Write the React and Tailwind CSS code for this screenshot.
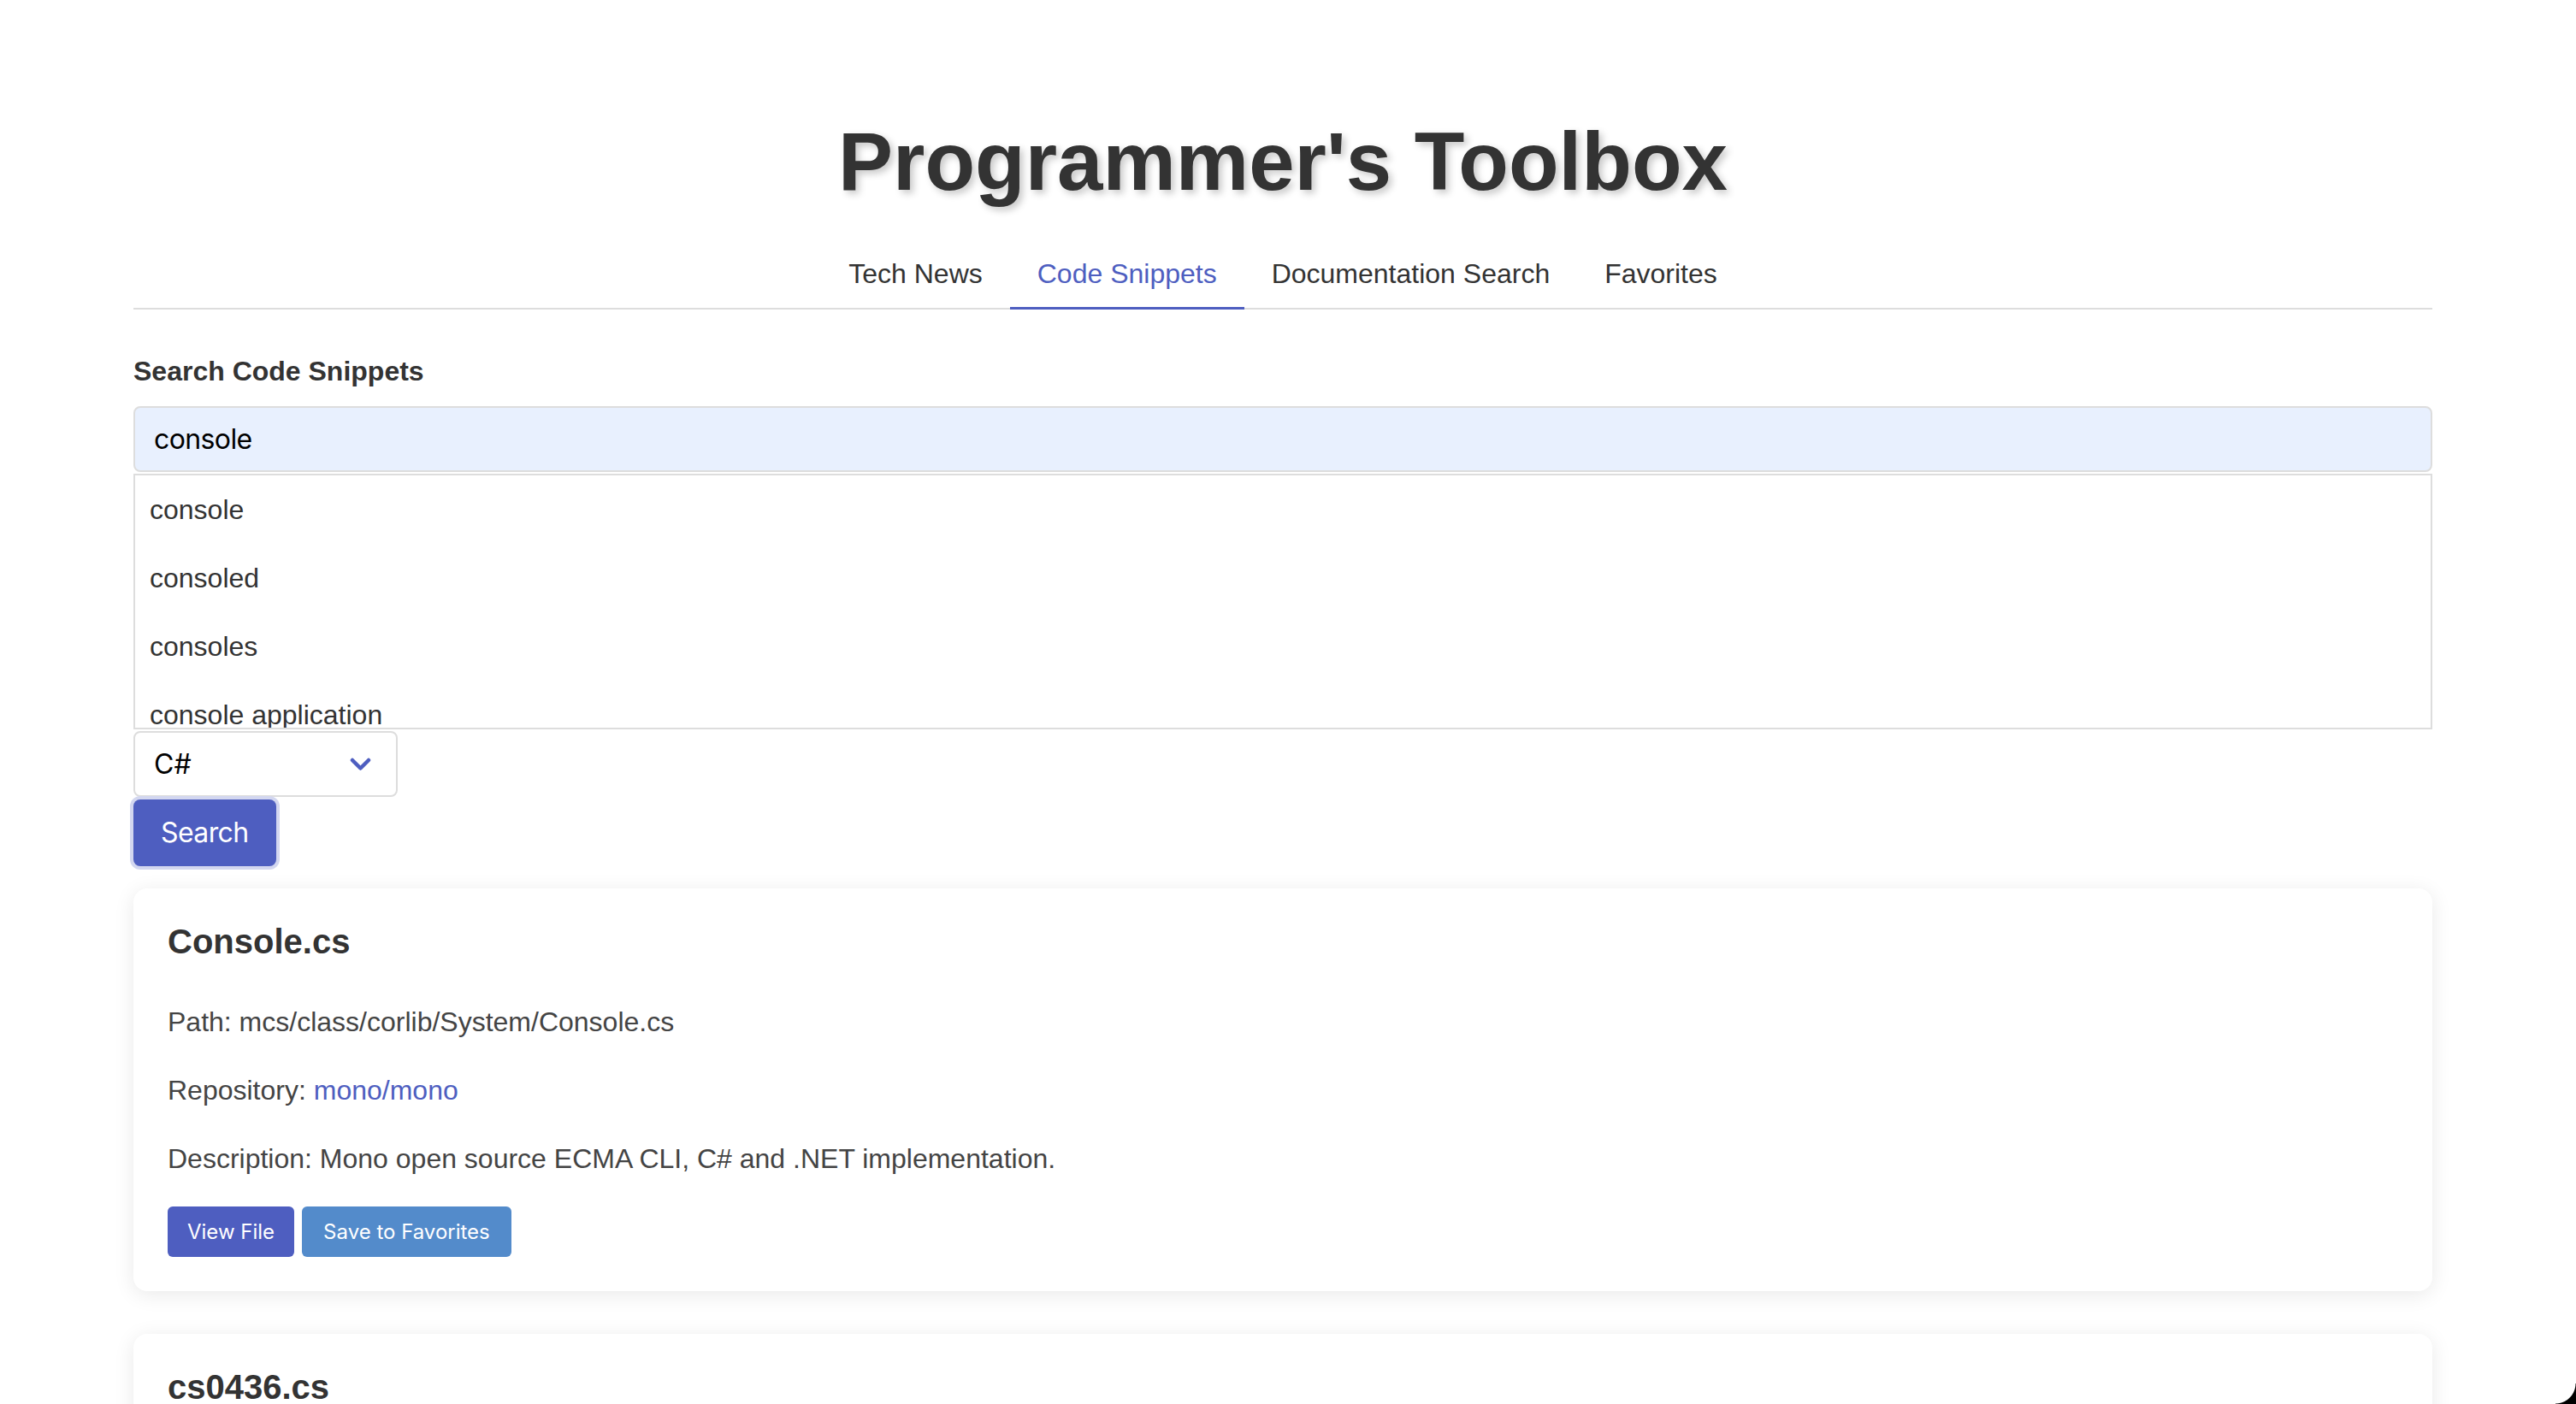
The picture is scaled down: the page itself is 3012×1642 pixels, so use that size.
import React from "react";

const tabs = ["Tech News", "Code Snippets", "Documentation Search", "Favorites"];
const suggestions = ["console", "consoled", "consoles", "console application"];

function Card({ title, path, repo, desc }) {
  return (
    <div className="rounded-[16px] bg-white px-[40px] pt-[32px] pb-[40px] shadow-[0_4px_24px_rgba(0,0,0,0.09)]">
      <h3 className="mb-[40px] text-[40px] font-bold leading-[60px] text-[#333]">{title}</h3>
      <p className="mb-[32px] text-[32px] leading-[48px] text-[#444]">Path: {path}</p>
      <p className="mb-[32px] text-[32px] leading-[48px] text-[#444]">
        Repository: <span className="text-[#4e5ec0]">{repo}</span>
      </p>
      <p className="mb-[32px] text-[32px] leading-[48px] text-[#444]">Description: {desc}</p>
      <div className="flex gap-[9px] font-['Inter','Liberation_Sans',sans-serif]">
        <button className="h-[59px] rounded-[6px] bg-[#4e5ec0] px-[23px] text-[24px] text-white">View File</button>
        <button className="h-[59px] rounded-[6px] bg-[#538bcb] px-[25px] text-[24px] text-white">Save to Favorites</button>
      </div>
    </div>
  );
}

export default function App() {
  return (
    <div className="relative h-screen overflow-hidden bg-white font-['Liberation_Sans',Arial,sans-serif] text-[#333]">
      <div className="w-[3000px] px-[156px]">
        <h1 className="pt-[134px] text-center text-[96px] font-bold leading-[110px] text-[#333] [text-shadow:4px_4px_8px_rgba(0,0,0,0.22)]">
          Programmer's Toolbox
        </h1>
        <nav className="mt-[37px] flex justify-center border-b-2 border-[#ddd]">
          {tabs.map((t) => (
            <div
              key={t}
              className={
                t === "Code Snippets"
                  ? "-mb-[2px] border-b-[3px] border-[#4e5ec0] px-[32px] pt-[21px] pb-[21px] text-[32px] leading-[36px] text-[#4e5ec0]"
                  : "-mb-[2px] border-b-[3px] border-transparent px-[32px] pt-[21px] pb-[21px] text-[32px] leading-[36px] text-[#333]"
              }
            >
              {t}
            </div>
          ))}
        </nav>

        <label className="mt-[48px] mb-[17px] block text-[32px] font-bold leading-[48px] text-[#333]">
          Search Code Snippets
        </label>
        <div className="flex h-[77px] w-full items-center rounded-[8px] border-2 border-[#ddd] bg-[#e8f0fe] px-[22px] font-['Inter','Liberation_Sans',sans-serif] text-[32px] tracking-[-0.6px] text-black">
          console
        </div>
        <div className="mt-[2px] h-[299px] overflow-hidden border-2 border-[#ddd] bg-white">
          {suggestions.map((s) => (
            <div key={s} className="flex h-[80px] items-center px-[17px] text-[32px] text-[#333]">
              {s}
            </div>
          ))}
        </div>
        <div className="mt-[2px] flex h-[77px] w-[309px] items-center justify-between rounded-[8px] border-2 border-[#ddd] bg-white pl-[22px] pr-[29px] font-['Inter','Liberation_Sans',sans-serif] text-[32px] text-black">
          <span>C#</span>
          <svg width="25" height="16" viewBox="0 0 25 16" fill="none">
            <path d="M3 3 L12.5 12.5 L22 3" stroke="#4e5ec0" strokeWidth="4.5" strokeLinecap="round" strokeLinejoin="round" />
          </svg>
        </div>
        <button className="mt-[3px] ml-0 block h-[78px] rounded-[8px] bg-[#4e5ec0] px-[32px] font-['Inter','Liberation_Sans',sans-serif] text-[32px] tracking-[-0.6px] text-white shadow-[0_0_0_4px_#d3d7f0]">
          Search
        </button>

        <div className="mt-[26px] flex flex-col gap-[50px]">
          <Card
            title="Console.cs"
            path="mcs/class/corlib/System/Console.cs"
            repo="mono/mono"
            desc="Mono open source ECMA CLI, C# and .NET implementation."
          />
          <Card
            title="cs0436.cs"
            path="mcs/errors/cs0436.cs"
            repo="mono/mono"
            desc="Mono open source ECMA CLI, C# and .NET implementation."
          />
        </div>
      </div>
      <div className="pointer-events-none fixed bottom-0 right-0 h-[24px] w-[24px] bg-[radial-gradient(circle_at_top_left,transparent_23px,#000_24px)]" />
    </div>
  );
}
